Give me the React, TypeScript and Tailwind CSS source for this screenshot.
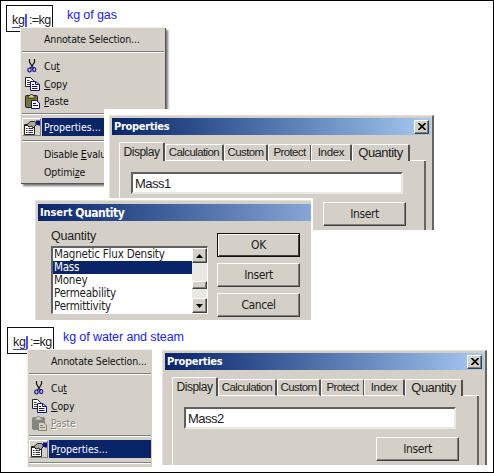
import type { ReactNode } from "react";

const menuFont = "font-['DejaVu_Sans_Condensed','DejaVu_Sans',sans-serif] [font-stretch:condensed]";
const arial = "font-['Liberation_Sans',Arial,sans-serif]";

const raised =
  "border border-t-white border-l-white border-r-[#404040] border-b-[#404040] shadow-[inset_-1px_-1px_0_#808080]";

function CutIcon() {
  return (
    <svg width="10" height="14" viewBox="0 0 10 14" fill="none">
      <path d="M2.5 0v3l3 5M7.5 0v3l-3 5" stroke="#111" strokeWidth="1.2" />
      <path d="M4.5 8L3 9.5M5.5 8L7 9.5" stroke="#10108c" strokeWidth="1.3" />
      <ellipse cx="2.5" cy="11" rx="1.7" ry="2" stroke="#10108c" strokeWidth="1.2" />
      <ellipse cx="7.2" cy="10.5" rx="1.6" ry="2" stroke="#10108c" strokeWidth="1.2" />
    </svg>
  );
}

function CopyIcon() {
  return (
    <svg width="15" height="14" viewBox="0 0 15 14">
      <path d="M.5.5h5l3 3v6h-8z" fill="#fff" stroke="#222" />
      <path d="M2 3.5h2.5M2 5.5h4M2 7.5h4" stroke="#444" />
      <path d="M5.5 4.5h5l4 3v6h-9z" fill="#fff" stroke="#10108c" />
      <path d="M10.5 4.5v3h4M7 7.5h2M7 9.5h5.5M7 11.5h5.5" stroke="#10108c" fill="none" />
    </svg>
  );
}

function PasteIcon({ disabled }: { disabled?: boolean }) {
  const ink = disabled ? "#848480" : "#222";
  const paper = disabled ? "#848480" : "#10108c";
  return (
    <svg width="15" height="15" viewBox="0 0 15 15">
      <rect x=".5" y="1.5" width="12" height="12" rx="1" fill={disabled ? "#848480" : "#77733a"} stroke={ink} />
      <path d="M3 4V2h1.6L5.5.5h2L8.4 2H10v2z" fill={disabled ? "#d4d0c8" : "#e5df68"} stroke={ink} strokeWidth=".8" />
      <path d="M6.5 6.5h5l3 2.5v5.5h-8z" fill={disabled ? "#d4d0c8" : "#fff"} stroke={paper} />
      <path d="M8 9.5h3M8 11.5h5" stroke={paper} />
    </svg>
  );
}

function PropertiesIcon() {
  return (
    <svg width="16" height="15" viewBox="0 0 16 15">
      <path d="M.5 4.5h10v10H.5z" fill="#fff" stroke="#222" />
      <path d="M1 5.5h9" stroke="#222" />
      <path d="M2 8.5h1.5M2 10.5h1.5M2 12.5h1.5M4.5 8.5H9M4.5 10.5H9M4.5 12.5H9" stroke="#333" />
      <path d="M3 4.5L6.5 1.5h4l1.5 1v2.5L9 8 8 6 5 7z" fill="#aaa79e" stroke="#222" />
      <path d="M12 .5h4v5h-2l-2-1z" fill="#10108c" />
    </svg>
  );
}

type ItemProps = { icon?: ReactNode; children: ReactNode; disabled?: boolean; className?: string };

function MenuItem({ icon, children, disabled, className = "h-[18px]" }: ItemProps) {
  return (
    <div className={`flex shrink-0 items-center ${className} ${disabled ? "text-[#848480]" : ""}`}>
      <span className="flex w-[22px] shrink-0 items-center justify-center pr-[2px]">{icon}</span>
      <span className={disabled ? "[text-shadow:1px_1px_0_#fff]" : ""}>{children}</span>
    </div>
  );
}

function Separator({ className = "" }: { className?: string }) {
  return <div className={`h-[2px] shrink-0 border-t border-b border-t-[#808080] border-b-white ${className}`} />;
}

type MenuProps = { className: string; pasteDisabled?: boolean; children?: ReactNode };

function ContextMenu({ className, pasteDisabled, children }: MenuProps) {
  return (
    <div
      className={`absolute flex flex-col border-t border-l border-[#f3f1ec] bg-[#d4d0c8] px-[1px] text-[10.5px] leading-none tracking-[-0.15px] whitespace-nowrap text-[#111] ${menuFont} ${className}`}
    >
      <MenuItem className="mt-[1px] h-[20px]">Annotate Selection...</MenuItem>
      <Separator className="mt-[2px]" />
      <MenuItem icon={<CutIcon />} className="mt-[4px] h-[18px]">
        Cu<u>t</u>
      </MenuItem>
      <MenuItem icon={<CopyIcon />}>
        <u>C</u>opy
      </MenuItem>
      <MenuItem icon={<PasteIcon disabled={pasteDisabled} />} disabled={pasteDisabled} className="h-[17px]">
        <u>P</u>aste
      </MenuItem>
      <Separator className="mt-[3px]" />
      <div className="mt-[3px] flex h-[18px] shrink-0 items-center">
        <span className="flex h-[18px] w-[19px] items-center justify-center border border-t-white border-l-white border-r-[#808080] border-b-[#808080]">
          <PropertiesIcon />
        </span>
        <span className="ml-[1px] flex h-[18px] flex-1 items-center bg-[#0a246a] pl-[2px] tracking-normal text-white">
          <span>
            P<u>r</u>operties...
          </span>
        </span>
      </div>
      <Separator className="mt-[4px]" />
      {children}
    </div>
  );
}

function MathBox({ className }: { className: string }) {
  return (
    <div
      className={`absolute flex h-[27px] w-[47px] items-start border border-[#111] pt-[8px] pl-[5px] text-[12.5px] leading-[13px] text-[#222] ${arial} ${className}`}
    >
      <span className="h-[14px] w-[13px] border-b border-[#4040ff] tracking-[-0.2px]">kg</span>
      <span className="h-[14px] w-[2px] bg-[#5050ff]" />
      <span className="ml-[2px] tracking-[-0.6px]">:=kg</span>
    </div>
  );
}

function Button({ children, className = raised }: { children: ReactNode; className?: string }) {
  return (
    <div
      className={`flex h-[24px] w-[83px] shrink-0 items-center justify-center pb-[1px] text-[12px] leading-none tracking-[-0.4px] ${menuFont} ${className}`}
    >
      {children}
    </div>
  );
}

function Tab({ children, className }: { children: ReactNode; className: string }) {
  return (
    <div
      className={`flex shrink-0 items-center justify-center rounded-t-[2px] border-t border-l border-t-white border-l-white border-r-[#505050] ${className}`}
    >
      {children}
    </div>
  );
}

function PropertiesWindow({ className, value }: { className: string; value: string }) {
  return (
    <div
      className={`absolute h-[115px] w-[325px] overflow-hidden border-t border-r-2 border-l border-t-[#e6e3dd] border-r-[#66645f] border-l-[#e6e3dd] bg-[#d4d0c8] pt-[2px] pl-[2px] text-[#222] ${arial} ${className}`}
    >
      <div className="flex h-[17px] w-[319px] items-center justify-between bg-gradient-to-r from-[#0a246a] to-[#a6caf0] pr-[2px] pl-[2px]">
        <span className={`text-[11px] leading-none font-bold tracking-[-0.3px] text-white ${menuFont}`}>Properties</span>
        <span className={`flex h-[14px] w-[15px] items-center justify-center bg-[#d4d0c8] ${raised}`}>
          <svg width="8" height="7" viewBox="0 0 8 7">
            <path d="M.5 0l7 7M7.5 0l-7 7" stroke="#000" strokeWidth="1.6" />
          </svg>
        </span>
      </div>
      <div className="mt-[7px] ml-[7px] flex h-[19px] w-[307px] items-end text-[11.5px] leading-none tracking-[-0.6px]">
        <Tab className="h-[19px] w-[46px] border-r-2 pb-[1px] text-[12px] tracking-[-0.5px]">Display</Tab>
        <Tab className="h-[17px] w-[59px] border-r-2 border-b border-b-white">Calculation</Tab>
        <Tab className="h-[17px] w-[44px] border-r-2 border-b border-b-white">Custom</Tab>
        <Tab className="h-[17px] w-[43px] border-r border-b border-b-white">Protect</Tab>
        <Tab className="h-[17px] w-[41px] border-r-2 border-b border-b-white tracking-[-0.3px]">Index</Tab>
        <Tab className="h-[17px] w-[58px] border-r-2 pb-[1px] text-[13px] tracking-[-0.5px]">Quantity</Tab>
        <div className="h-px flex-1 bg-white" />
      </div>
      <div className="ml-[7px] h-[70px] w-[307px] border-r-2 border-l border-r-[#66645f] border-l-white pt-[11px] pl-[11px]">
        <div className="flex h-[22px] w-[272px] items-center border-2 border-t-[#606060] border-r-[#ece9e4] border-b-[#ece9e4] border-l-[#606060] bg-white pl-[2px] text-[13px] leading-none tracking-[-0.5px]">
          {value}
        </div>
        <div className="pt-[8px] pl-[192px]">
          <Button>Insert</Button>
        </div>
      </div>
    </div>
  );
}

const quantities = ["Magnetic Flux Density", "Mass", "Money", "Permeability", "Permittivity"];

function ScrollArrow({ up }: { up?: boolean }) {
  return (
    <div className={`flex h-[15px] w-[15px] items-center justify-center bg-[#d4d0c8] ${raised}`}>
      <svg width="7" height="4" viewBox="0 0 7 4">
        <path d={up ? "M0 4L3.5 0 7 4z" : "M0 0h7L3.5 4z"} fill="#000" />
      </svg>
    </div>
  );
}

function InsertQuantityWindow() {
  return (
    <div className="absolute top-[198px] left-[35px] h-[122px] w-[278px] border-t-2 border-r-2 border-white bg-[#d4d0c8] text-[#222]">
      <div className="h-[120px] border-t border-l border-[#e6e3dd] pt-[3px] pl-[2px]">
        <div
          className={`flex h-[17px] items-center gap-[3px] bg-gradient-to-r from-[#0a246a] to-[#86a6d5] pl-[2px] leading-none font-bold text-white ${menuFont}`}
        >
          <span className="text-[11px] tracking-[-0.1px]">Insert</span>
          <span className="text-[12px] tracking-[-0.5px]">Quantity</span>
        </div>
        <div className="flex pl-[13px]">
          <div className="w-[157px] pt-[8px]">
            <div className={`h-[17px] text-[12.5px] leading-[15px] tracking-[-0.2px] ${arial}`}>Quantity</div>
            <div className="flex h-[68px] border-t-2 border-r border-b border-l-2 border-t-[#606060] border-r-white border-b-white border-l-[#606060] bg-white">
              <div className={`flex-1 text-[11.5px] leading-[13px] tracking-[-0.2px] whitespace-nowrap ${menuFont}`}>
                {quantities.map((name) => (
                  <div key={name} className={`h-[13px] pl-[1px] ${name === "Mass" ? "bg-[#0a246a] text-white" : ""}`}>
                    {name}
                  </div>
                ))}
              </div>
              <div className="flex w-[15px] flex-col bg-[#eae8e3]">
                <ScrollArrow up />
                <div className={`mt-[18px] h-[8px] bg-[#d4d0c8] ${raised}`} />
                <div className="flex-1" />
                <ScrollArrow />
              </div>
            </div>
          </div>
          <div className="ml-[9px] flex flex-col gap-[6px] pt-[12px]">
            <Button className="border border-[#111] shadow-[inset_1px_1px_0_#fff,inset_-1px_-1px_0_#404040]">OK</Button>
            <Button>Insert</Button>
            <Button>Cancel</Button>
          </div>
        </div>
      </div>
    </div>
  );
}

export default function App() {
  return (
    <div className={`relative h-[473px] w-[494px] overflow-hidden border border-black bg-white ${arial}`}>
      <div className="absolute -top-px -left-px h-[473px] w-[494px]">
        <MathBox className="top-[5px] left-[6px]" />
        <div className="absolute top-[8px] left-[67px] text-[12.5px] leading-[15px] tracking-[-0.1px] text-[#2020ff]">
          kg of gas
        </div>
        <ContextMenu className="top-[27px] left-[20px] h-[156px] w-[145px] shadow-[1px_1px_0_#555,3px_3px_2px_#777]">
          <MenuItem className="mt-[3px] h-[18px]">
            Disable <u>E</u>valu
          </MenuItem>
          <MenuItem>
            Optimi<u>z</u>e
          </MenuItem>
        </ContextMenu>
        <div className="absolute top-[109px] left-[104px] h-[89px] w-[70px] bg-white" />
        <PropertiesWindow className="top-[115px] left-[109px]" value="Mass1" />
        <InsertQuantityWindow />
        <MathBox className="top-[327px] left-[7px]" />
        <div className="absolute top-[330px] left-[63px] text-[12.5px] leading-[15px] tracking-[-0.1px] whitespace-nowrap text-[#2020ff]">
          kg of water and steam
        </div>
        <ContextMenu className="top-[349px] left-[27px] h-[118px] w-[125px]" pasteDisabled />
        <PropertiesWindow className="top-[350px] left-[162px]" value="Mass2" />
      </div>
    </div>
  );
}
